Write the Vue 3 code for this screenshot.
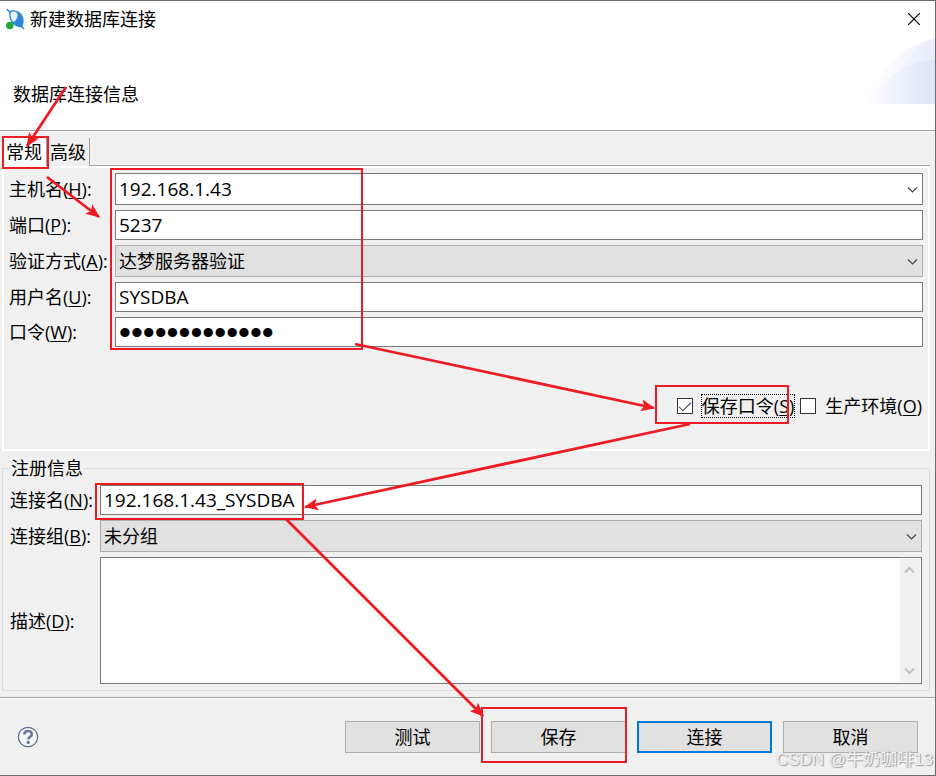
<script setup>
import { ref } from 'vue'

const host = ref('192.168.1.43')
const port = ref('5237')
const auth = ref('达梦服务器验证')
const user = ref('SYSDBA')
const password = ref('SYSDBA1234567')
const savePassword = ref(true)
const production = ref(false)
const connectionName = ref('192.168.1.43_SYSDBA')
const group = ref('未分组')
const description = ref('')
const activeTab = ref('常规')
const tabs = ['常规', '高级']
const actions = [
  { text: '测试', primary: false },
  { text: '保存', primary: false },
  { text: '连接', primary: true },
  { text: '取消', primary: false },
]
</script>

<template>
  <main class="dialog">
    <header class="titlebar">
      <svg class="app-icon" width="20" height="22" viewBox="0 0 20 22" aria-hidden="true">
        <path d="M3 3 C8 1 14 3 16.5 8 C18.5 13 17.5 16 16 19 C10 20 5 15 3.5 10Z" fill="#2f86d8" />
        <path d="M4.5 4.5 C8 2.5 11 4 11.5 6 C12 9 10 13 7.5 14 C5 12 4 8 4.5 4.5Z" fill="#e6f2fc" />
        <path d="M0.5 1 L4.5 4.5 M15 18 L18 21" stroke="#2f86d8" stroke-width="1.4" />
        <circle cx="3.8" cy="17.5" r="3.8" fill="#22a83a" />
      </svg>
      <h1 class="title">新建数据库连接</h1>
      <button class="close" type="button" aria-label="关闭">
        <svg width="12" height="12" viewBox="0 0 12 12"><path d="M0 0 L12 12 M12 0 L0 12" stroke="#000" stroke-width="1.2" /></svg>
      </button>
    </header>

    <section class="banner">
      <h2 class="subtitle">数据库连接信息</h2>
      <svg class="swoosh" width="72" height="66" viewBox="0 0 72 66" aria-hidden="true">
        <defs>
          <linearGradient id="outer" x1="0" x2="1"><stop offset="0" stop-color="#fff" /><stop offset="1" stop-color="#eef2fb" /></linearGradient>
          <linearGradient id="middle" x1="0" x2="1"><stop offset="0" stop-color="#f4f7fd" /><stop offset="1" stop-color="#e6ecf9" /></linearGradient>
          <linearGradient id="inner" x1="0" x2="1"><stop offset="0" stop-color="#fff" /><stop offset="0.4" stop-color="#f1f4fc" /><stop offset="1" stop-color="#dbe3f6" /></linearGradient>
        </defs>
        <path d="M0 66 C16 34 42 6 72 0 V66Z" fill="url(#outer)" />
        <path d="M32 42 C42 20 56 5 72 0 V42Z" fill="url(#middle)" />
        <path d="M0 66 C18 42 44 22 72 22 V66Z" fill="url(#inner)" />
      </svg>
    </section>

    <div class="tablist" role="tablist">
      <button
        v-for="tab in tabs"
        :key="tab"
        class="tab"
        :class="{ selected: tab === activeTab }"
        type="button"
        role="tab"
        :aria-selected="tab === activeTab"
        @click="activeTab = tab"
      >{{ tab }}</button>
      <span class="tab-line"></span>
    </div>

    <section class="panel" role="tabpanel">
      <div class="form">
        <label for="host">主机名(<u>H</u>):</label>
        <div class="combo">
          <input id="host" v-model="host" class="field tall" type="text" />
          <svg class="chevron" width="11" height="6" viewBox="0 0 11 6"><path d="M1 0.5 L5.5 5 L10 0.5" /></svg>
        </div>
        <label for="port">端口(<u>P</u>):</label>
        <input id="port" v-model="port" class="field" type="text" />
        <label for="auth">验证方式(<u>A</u>):</label>
        <div class="combo">
          <select id="auth" v-model="auth" class="field tall"><option>达梦服务器验证</option></select>
          <svg class="chevron" width="11" height="6" viewBox="0 0 11 6"><path d="M1 0.5 L5.5 5 L10 0.5" /></svg>
        </div>
        <label for="user">用户名(<u>U</u>):</label>
        <input id="user" v-model="user" class="field" type="text" />
        <label for="password">口令(<u>W</u>):</label>
        <input id="password" v-model="password" class="field password" type="password" />
      </div>
      <div class="checks">
        <label class="check"><input v-model="savePassword" type="checkbox" /><span class="focused">保存口令(<u>S</u>)</span></label>
        <label class="check"><input v-model="production" type="checkbox" /><span>生产环境(<u>O</u>)</span></label>
      </div>
    </section>

    <fieldset class="register">
      <legend>注册信息</legend>
      <div class="form register-form">
        <label for="cname">连接名(<u>N</u>):</label>
        <input id="cname" v-model="connectionName" class="field" type="text" />
        <label for="cgroup">连接组(<u>B</u>):</label>
        <div class="combo">
          <select id="cgroup" v-model="group" class="field tall"><option>未分组</option></select>
          <svg class="chevron" width="11" height="6" viewBox="0 0 11 6"><path d="M1 0.5 L5.5 5 L10 0.5" /></svg>
        </div>
        <label for="desc">描述(<u>D</u>):</label>
        <div class="memo">
          <textarea id="desc" v-model="description"></textarea>
          <div class="gutter" aria-hidden="true">
            <svg width="11" height="8" viewBox="0 0 11 8"><path d="M1 6.5 L5.5 2 L10 6.5" /></svg>
            <svg width="11" height="8" viewBox="0 0 11 8"><path d="M1 1.5 L5.5 6 L10 1.5" /></svg>
          </div>
        </div>
      </div>
    </fieldset>

    <footer class="footer">
      <button class="help" type="button" aria-label="帮助">
        <svg width="22" height="22" viewBox="0 0 22 22">
          <circle cx="11" cy="11" r="9.7" fill="#f4f5f8" stroke="#5d6d8e" stroke-width="1.2" />
          <path d="M7.4 8.6 C7.4 3.9 14.8 4 14.8 8.2 C14.8 10.8 11.3 10.8 11.3 13.4" fill="none" stroke="#66779a" stroke-width="2.6" />
          <circle cx="11.2" cy="16.4" r="1.6" fill="#66779a" />
        </svg>
      </button>
      <button v-for="action in actions" :key="action.text" class="action" :class="{ primary: action.primary }" type="button">{{ action.text }}</button>
    </footer>

    <svg class="marks" width="936" height="776" viewBox="0 0 936 776" aria-hidden="true">
      <defs>
        <marker id="head" viewBox="0 0 14 12" refX="13" refY="6" markerWidth="14" markerHeight="12" markerUnits="userSpaceOnUse" orient="auto">
          <path d="M0 0 L14 6 L0 12 L3 6Z" fill="#ed1c24" />
        </marker>
      </defs>
      <g fill="none" stroke="#ed1c24" stroke-width="2">
        <rect x="3" y="137" width="45" height="31" />
        <rect x="111" y="169" width="251" height="180" />
        <rect x="656" y="386" width="132" height="37" />
        <rect x="96" y="484" width="207" height="35" />
        <rect x="482" y="708" width="144" height="54" />
      </g>
      <g stroke="#ed1c24" stroke-width="2.8">
        <path d="M66 87 L27 146" marker-end="url(#head)" />
        <path d="M47 177 L99 217" marker-end="url(#head)" />
        <path d="M355 344 L654 408" marker-end="url(#head)" />
        <path d="M690 424 L305 507" marker-end="url(#head)" />
        <path d="M286 519 L483 716" marker-end="url(#head)" />
      </g>
    </svg>
    <p class="watermark">CSDN @牛奶咖啡13</p>
  </main>
</template>

<style>
body {
  margin: 0;
}
</style>

<style scoped>
.dialog,
.dialog * {
  box-sizing: border-box;
}
.dialog {
  position: relative;
  display: flex;
  flex-direction: column;
  min-height: 100vh;
  background: #f0f0f0;
  border: 1px solid #6b6b6b;
  border-left: 0;
  color: #000;
  font: 400 18px/24px "Open Sans", "Noto Sans CJK SC", sans-serif;
}
button,
input,
select,
textarea {
  font: inherit;
  color: inherit;
  margin: 0;
}
h1,
h2,
p {
  margin: 0;
  font-size: 18px;
  font-weight: 400;
}
u {
  text-decoration-thickness: 1px;
  text-underline-offset: 2px;
}
.titlebar {
  display: flex;
  align-items: center;
  height: 36px;
  padding: 0 15px 0 6px;
  background: #fff;
}
.title {
  flex: 1;
  margin-left: 4px;
}
.close,
.help {
  display: flex;
  padding: 0;
  border: 0;
  background: none;
}
.banner {
  position: relative;
  display: flex;
  align-items: flex-end;
  height: 94px;
  padding: 0 13px 24px;
  background: #fff;
  border-bottom: 1px solid #a0a0a0;
}
.swoosh {
  position: absolute;
  top: 1px;
  right: 0;
}
.tablist {
  display: flex;
  height: 35px;
  padding: 6px 5px 0 2px;
  border-top: 1px solid #fff;
}
.tab {
  height: 29px;
  padding: 0 3px;
  border: solid #a0a0a0;
  border-width: 0 1px 1px 0;
  background: none;
}
.tab.selected {
  padding: 0 4px;
  border-bottom-color: #fff;
  background: #fff;
}
.tab-line {
  flex: 1;
  border-bottom: 1px solid #a0a0a0;
}
.panel {
  margin: 0 5px 0 2px;
  padding: 5px 5px 31px;
  border: 2px solid #fff;
}
.form {
  display: grid;
  grid-template-columns: 106px minmax(0, 1fr);
  gap: 5px 0;
  align-items: center;
}
.form label {
  white-space: nowrap;
}
.field {
  display: block;
  width: 100%;
  height: 30px;
  padding: 0 3px;
  border: 1px solid #7a7a7a;
  border-radius: 0;
  background: #fff;
  font-size: 19px;
  outline: 0;
}
.field.tall {
  height: 32px;
}
select.field {
  appearance: none;
  border-color: #adadad;
  background: #e1e1e1;
  font-size: 18px;
}
.field.password {
  font-family: "Liberation Sans", sans-serif;
  font-size: 34px;
}
.combo {
  position: relative;
}
.chevron {
  position: absolute;
  right: 5px;
  top: 14px;
  fill: none;
  stroke: #444;
  stroke-width: 1.2;
  pointer-events: none;
}
.checks {
  display: flex;
  justify-content: flex-end;
  gap: 5px;
  margin-top: 47px;
}
.check {
  display: flex;
  align-items: center;
  gap: 8px;
  white-space: nowrap;
}
.check span {
  height: 24px;
  line-height: 22px;
  border: 1px solid transparent;
}
.check .focused {
  border: 1px dotted #000;
}
.check input {
  appearance: none;
  display: grid;
  place-items: center;
  width: 16px;
  height: 16px;
  border: 1px solid #333;
  background: #fff;
}
.check input:checked::before {
  content: "";
  width: 11px;
  height: 5px;
  margin-bottom: 3px;
  border: solid #333;
  border-width: 0 0 1px 1px;
  transform: rotate(-45deg);
}
.register {
  flex: 1;
  min-width: 0;
  margin: 6px 5px 6px 2px;
  padding: 6px 7px;
  border: 1px solid #dcdcdc;
}
.register legend {
  padding: 0 1px;
  line-height: 22px;
}
.register-form {
  grid-template-columns: 90px minmax(0, 1fr);
}
.memo {
  display: flex;
  height: 127px;
  padding: 1px;
  border: 1px solid #7a7a7a;
  background: #fff;
}
.memo textarea {
  flex: 1;
  min-width: 0;
  padding: 2px;
  border: 0;
  outline: 0;
  background: none;
  resize: none;
}
.gutter {
  display: flex;
  flex-direction: column;
  align-items: center;
  justify-content: space-between;
  width: 20px;
  padding: 7px 1px 7px 0;
  background: #f0f0f0;
}
.gutter svg {
  fill: none;
  stroke: #bfbfbf;
  stroke-width: 2;
}
.footer {
  display: flex;
  align-items: center;
  gap: 11px;
  padding: 23px 17px 22px;
  border-top: 1px solid #a0a0a0;
  box-shadow: inset 0 1px #fff;
}
.help {
  margin-right: auto;
}
.action {
  width: 135px;
  height: 32px;
  padding: 0;
  border: 1px solid #adadad;
  background: #e1e1e1;
}
.action.primary {
  border: 2px solid #0078d7;
}
.marks {
  position: absolute;
  top: -1px;
  left: 0;
  pointer-events: none;
}
.watermark {
  position: absolute;
  right: 2px;
  bottom: 3px;
  color: #f4f4f4;
  font-family: "Liberation Sans", "Noto Sans CJK SC", sans-serif;
  font-size: 17px;
  text-shadow: 1px 1px 1px #999, 0 0 1px #aaa;
  pointer-events: none;
}
</style>
